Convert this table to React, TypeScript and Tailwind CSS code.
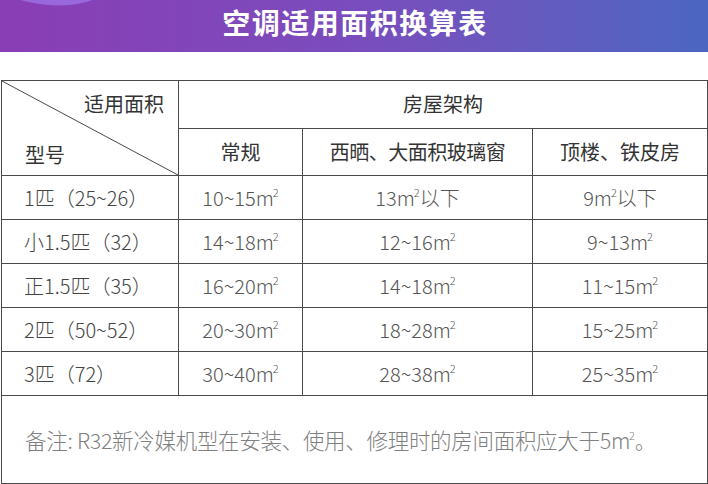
const font = { fontFamily: '"Noto Sans CJK SC", "Noto Sans", sans-serif' };

const rows: [string, string, string, string][] = [
  ["1匹（25~26）", "10~15", "13|以下", "9|以下"],
  ["小1.5匹（32）", "14~18", "12~16", "9~13"],
  ["正1.5匹（35）", "16~20", "14~18", "11~15"],
  ["2匹（50~52）", "20~30", "18~28", "15~25"],
  ["3匹（72）", "30~40", "28~38", "25~35"],
];

// m with a small raised 2, like the picture
function Sq() {
  return (
    <>
      m<sup className="text-[11px] -top-[9px] -ml-[1px]">2</sup>
    </>
  );
}

function Area({ v }: { v: string }) {
  const [num, tail] = v.split("|");
  return (
    <>
      {num}
      <Sq />
      {tail}
    </>
  );
}

const cell = "border border-[#4a4a4a]";

export default function App() {
  return (
    <div className="w-[708px] h-[484px] bg-white overflow-hidden" style={font}>
      {/* title band */}
      <div className="relative h-[52px] bg-gradient-to-r from-[#8a3db5] via-[#7a4cbd] to-[#4a66c1] flex items-center justify-center">
        <svg className="absolute left-0 top-0" width="120" height="8" viewBox="0 0 120 8">
          <path d="M20 0 Q45 7 70 5 Q85 3 92 0 Z" fill="#9d72e6" opacity="0.8" />
        </svg>
        <h1 className="text-white text-[28px] font-bold tracking-[1.5px] leading-none -mt-[9px] ml-[2px]">
          空调适用面积换算表
        </h1>
      </div>

      <div className="pt-[28px] pl-px">
        <table className="border-collapse w-[706px] table-fixed">
          <colgroup>
            <col className="w-[177px]" />
            <col className="w-[124px]" />
            <col className="w-[230px]" />
            <col className="w-[175px]" />
          </colgroup>
          <tbody>
            <tr className="h-[47px]">
              <td rowSpan={2} className={`relative p-0 align-top ${cell}`}>
                <svg className="absolute inset-0 w-full h-full" preserveAspectRatio="none" viewBox="0 0 100 100">
                  <line x1="0" y1="0" x2="100" y2="100" stroke="#4a4a4a" strokeWidth="1" vectorEffect="non-scaling-stroke" />
                </svg>
                <div className="relative h-[94px] text-[#333] text-[20px] leading-none">
                  <span className="absolute right-[14px] top-[13px]">适用面积</span>
                  <span className="absolute left-[23px] top-[64px]">型号</span>
                </div>
              </td>
              <td colSpan={3} className={`${cell} text-center text-[20px] text-[#333]`}>
                房屋架构
              </td>
            </tr>
            <tr className="h-[47px]">
              <td className={`${cell} text-center text-[20px] text-[#333]`}>常规</td>
              <td className={`${cell} text-center text-[20px] text-[#333] tracking-[-0.5px]`}>西晒、大面积玻璃窗</td>
              <td className={`${cell} text-center text-[20px] text-[#333]`}>顶楼、铁皮房</td>
            </tr>
            {rows.map((r, i) => (
              <tr key={i} className="h-[44px]">
                <td className={`${cell} pl-[22px] text-[20px] font-light text-[#444] whitespace-nowrap`}>
                  {r[0]}
                </td>
                {r.slice(1).map((v, j) => (
                  <td key={j} className={`${cell} text-center text-[20px] font-light text-[#555]`}>
                    <Area v={v} />
                  </td>
                ))}
              </tr>
            ))}
            <tr className="h-[88px]">
              <td colSpan={4} className={`${cell} pl-[23px] pt-[2px] text-[21.5px] font-light text-[#808080] whitespace-nowrap tracking-[-0.3px]`}>
                备注: R32新冷媒机型在安装、使用、修理时的房间面积应大于5<Sq />。
              </td>
            </tr>
          </tbody>
        </table>
      </div>
    </div>
  );
}
